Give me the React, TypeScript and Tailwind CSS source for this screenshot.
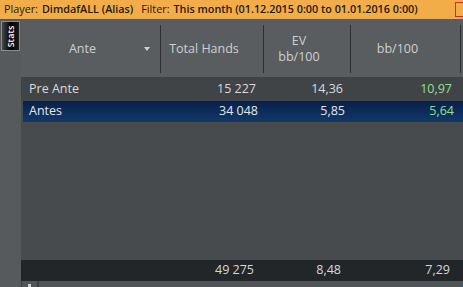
import React from "react";

type Row = { name: string; hands: string; ev: string; bb: string; selected?: boolean };

const rows: Row[] = [
    { name: "Pre Ante", hands: "15 227", ev: "14,36", bb: "10,97" },
    { name: "Antes", hands: "34 048", ev: "5,85", bb: "5,64", selected: true },
];

const cols = "grid grid-cols-[140px_103px_87px_110px_1fr]";

export default function App() {
    return (
        <div className="w-[463px] h-[287px] flex flex-col bg-[#565a5d] overflow-hidden font-['Open_Sans',sans-serif] text-[12.5px]">
            {/* filter bar */}
            <div className="h-[19px] flex items-center bg-[#f3ad48] text-[#1e1a14] text-[10.8px] leading-none pl-[4px] whitespace-nowrap">
                <span>Player:</span>
                <span className="ml-[4px] font-semibold">DimdafALL (Alias)</span>
                <span className="ml-[8px]">Filter:</span>
                <span className="ml-[4px] font-semibold">This month (01.12.2015 0:00 to 01.01.2016 0:00)</span>
                <div className="ml-auto self-start mt-[2px] w-[8px] h-[15px] border border-r-0 border-[#d22a1c]" />
            </div>

            <div className="flex-1 flex">
                {/* side tabs */}
                <div className="w-[21px] flex flex-col items-center pt-[2px] bg-[#565a5d]">
                    <div className="w-[19px] h-[30px] flex items-center justify-center overflow-hidden border border-[#8a8d8f] bg-gradient-to-r from-[#4a4a4a] via-[#050505] to-[#1a1a1a]">
                        <span className="-rotate-90 text-white text-[9px] font-semibold leading-none">Stats</span>
                    </div>
                </div>

                {/* table */}
                <div className="flex-1 flex flex-col bg-[#474b4e] text-[#dadada]">
                    <div className={`${cols} h-[58px] bg-[#595d60] pt-[6px] pb-[4px] text-[#cfcfcf]`}>
                        <div className="flex items-center border-r border-[#2c2f31]">
                            <span className="flex-1 text-center">Ante</span>
                            <div className="w-[16px] flex">
                                <div className="w-0 h-0 border-l-[3.5px] border-r-[3.5px] border-t-[4px] border-l-transparent border-r-transparent border-t-[#d0d0d0]" />
                            </div>
                        </div>
                        <div className="flex items-center border-r border-[#2c2f31] pr-[16px]">
                            <span className="flex-1 text-center">Total Hands</span>
                        </div>
                        <div className="flex items-center border-r border-[#2c2f31] pr-[16px]">
                            <span className="flex-1 text-center leading-[16px]">
                                EV
                                <br />
                                bb/100
                            </span>
                        </div>
                        <div className="flex items-center border-r border-[#2c2f31] pr-[16px]">
                            <span className="flex-1 text-center">bb/100</span>
                        </div>
                        <div />
                    </div>

                    {rows.map((r, i) => (
                        <div
                            key={r.name}
                            className={`${cols} items-center ${
                                r.selected
                                    ? "h-[21px] ml-[2px] bg-gradient-to-b from-[#0a1f47] to-[#0f3a6c] text-[#e6e6e6]"
                                    : "h-[24px] bg-[#414447]"
                            }`}
                        >
                            <span className={i === 1 ? "pl-[6px]" : "pl-[8px]"}>{r.name}</span>
                            <span className="text-right pr-[8px]">{r.hands}</span>
                            <span className="text-right pr-[8px]">{r.ev}</span>
                            <span className="text-right pr-[9px] text-[#8fe08a]">{r.bb}</span>
                            <span />
                        </div>
                    ))}

                    <div className="flex-1" />

                    <div className={`${cols} items-center h-[21px] bg-[#222628] text-[#d8d8d8]`}>
                        <span />
                        <span className="text-right pr-[10px]">49 275</span>
                        <span className="text-right pr-[10px]">8,48</span>
                        <span className="text-right pr-[11px]">7,29</span>
                        <span />
                    </div>

                    {/* scroll strip */}
                    <div className="h-[6px] flex gap-[2px] pl-[1px] bg-[#3c3f42]">
                        <div className="w-[15px] bg-[#505457] flex justify-center items-end">
                            <div className="w-[3px] h-[3px] bg-[#cfcfcf]" />
                        </div>
                        <div className="flex-1 bg-[#505457]" />
                    </div>
                </div>
            </div>
        </div>
    );
}
